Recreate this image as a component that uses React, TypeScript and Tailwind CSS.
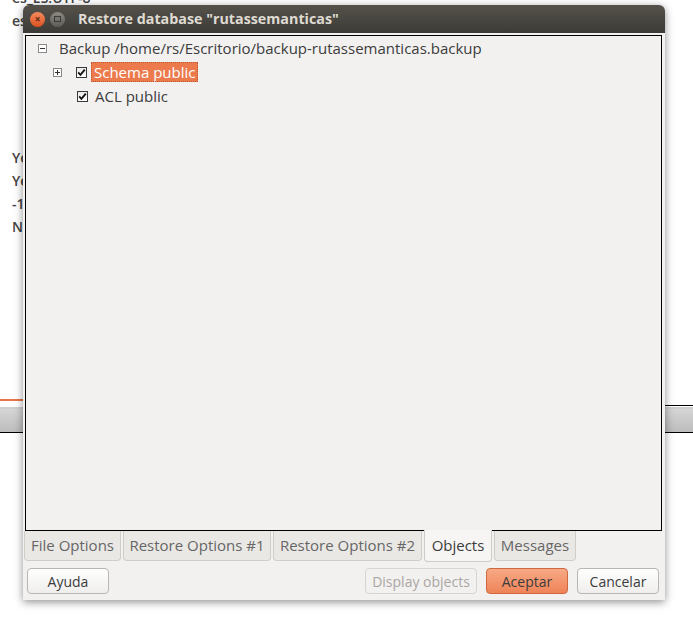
import React from "react";

const font = { fontFamily: '"Open Sans", "DejaVu Sans", sans-serif' };

function Expander({ open }: { open: boolean }) {
  return (
    <span className="w-[9px] h-[9px] border border-[#8a8a8a] bg-white flex items-center justify-center relative">
      <span className="absolute w-[5px] h-px bg-[#333]" />
      {!open && <span className="absolute w-px h-[5px] bg-[#333]" />}
    </span>
  );
}

function Check() {
  return (
    <span className="w-[11px] h-[11px] border border-[#3a3a3a] bg-gradient-to-b from-[#e8e8e8] to-white flex items-center justify-center">
      <svg width="9" height="9" viewBox="0 0 9 9">
        <path d="M1.2 4.4 L3.4 6.8 L7.8 1.6" stroke="#111" strokeWidth="1.8" fill="none" />
      </svg>
    </span>
  );
}

function Tab({ label, active, w }: { label: string; active?: boolean; w: string }) {
  return active ? (
    <div className={`${w} h-[32px] -mt-px bg-[#f6f5f4] border border-t-0 border-[#cfcbc6] rounded-b-[4px] flex items-center justify-center text-[15px] text-[#3c3c3c]`}>
      {label}
    </div>
  ) : (
    <div className={`${w} h-[30px] bg-[#eae8e5] border border-t-0 border-[#d0ccc7] rounded-b-[4px] flex items-center justify-center text-[15px] text-[#666]`}>
      {label}
    </div>
  );
}

function Button({ label, kind }: { label: string; kind?: "primary" | "disabled" }) {
  const cls =
    kind === "primary"
      ? "border-[#cf6a40] bg-gradient-to-b from-[#f7a985] to-[#ef8358] text-[#3c3c3c]"
      : kind === "disabled"
      ? "border-[#d8d5d1] bg-[#f2f1f0] text-[#aaa7a3] text-[14.6px]"
      : "border-[#b9b5b0] bg-gradient-to-b from-white to-[#efeeed] text-[#3c3c3c]";
  return (
    <div className={`h-[26px] rounded-[4px] border flex items-center justify-center text-[14px] ${cls}`}>
      {label}
    </div>
  );
}

export default function App() {
  return (
    <div className="w-[693px] h-[626px] relative bg-white overflow-hidden" style={font}>
      {/* background window text */}
      <div className="pl-[12px] -mt-[14px] flex flex-col text-[14px] font-semibold text-[#444] leading-[23px]">
        <div>es_ES.UTF-8</div>
        <div>es_ES.UTF-8</div>
        <div className="h-[114px]" />
        <div>Yes</div>
        <div>Yes</div>
        <div>-1</div>
        <div>No</div>
      </div>
      <div className="absolute left-0 right-0 top-[399px] flex flex-col">
        <div className="h-[2px] w-[24px] bg-[#e9754a]" />
        <div className="h-[6px] bg-white" />
        <div className="h-[2px] bg-[#cfcfcf]" />
        <div className="h-[23px] bg-gradient-to-b from-[#d6d6d6] to-[#bcbcbc]" />
        <div className="h-[1px] bg-black" />
      </div>
      <div className="absolute left-[665px] right-0 top-[405px] h-px bg-black" />

      {/* dialog */}
      <div className="absolute left-[23px] top-[5px] w-[642px] h-[595px] flex flex-col rounded-t-[6px] bg-[#f2f1f0] shadow-[0_2px_8px_rgba(0,0,0,0.45)]">
        <div className="h-[28px] rounded-t-[6px] bg-gradient-to-b from-[#55524b] to-[#3c3b37] flex items-center pl-[7px]">
          <span className="w-[15px] h-[15px] rounded-full bg-gradient-to-b from-[#f48b5c] to-[#dc4f1e] flex items-center justify-center text-[10px] font-bold text-[#5a2a14] leading-none">
            ×
          </span>
          <span className="ml-[5px] w-[15px] h-[15px] rounded-full bg-gradient-to-b from-[#8b8a85] to-[#5d5c57] flex items-center justify-center">
            <span className="w-[7px] h-[6px] border border-[#3c3b37]" />
          </span>
          <span className="ml-[13px] text-[14.3px] font-bold text-[#dfdbd2]">Restore database "rutassemanticas"</span>
        </div>

        <div className="ml-[2px] mt-[2px] w-[637px] h-[496px] border border-black bg-[#f2f1f0] text-[15px] text-[#3c3c3c]">
          <div className="h-[24px] flex items-center pl-[12px]">
            <Expander open />
            <span className="ml-[12px]">Backup /home/rs/Escritorio/backup-rutassemanticas.backup</span>
          </div>
          <div className="h-[24px] flex items-center pl-[27px]">
            <Expander open={false} />
            <span className="ml-[14px]"><Check /></span>
            <span className="ml-[4px] h-[20px] px-[3px] flex items-center bg-[#ec7a4c] text-white outline-1 outline-dotted outline-[#b85a34] -outline-offset-1">
              Schema public
            </span>
          </div>
          <div className="h-[24px] flex items-center pl-[51px]">
            <Check />
            <span className="ml-[7px]">ACL public</span>
          </div>
        </div>

        <div className="flex pl-[1px] gap-[2px]">
          <Tab label="File Options" w="w-[97px]" />
          <Tab label="Restore Options #1" w="w-[148px]" />
          <Tab label="Restore Options #2" w="w-[149px]" />
          <Tab label="Objects" active w="w-[68px]" />
          <Tab label="Messages" w="w-[82px]" />
        </div>

        <div className="mt-[6px] flex items-center pl-[4px] pr-[6px]">
          <div className="w-[82px]"><Button label="Ayuda" /></div>
          <div className="ml-auto flex gap-[9px]">
            <div className="w-[112px]"><Button label="Display objects" kind="disabled" /></div>
            <div className="w-[82px]"><Button label="Aceptar" kind="primary" /></div>
            <div className="w-[82px]"><Button label="Cancelar" /></div>
          </div>
        </div>
      </div>
    </div>
  );
}
